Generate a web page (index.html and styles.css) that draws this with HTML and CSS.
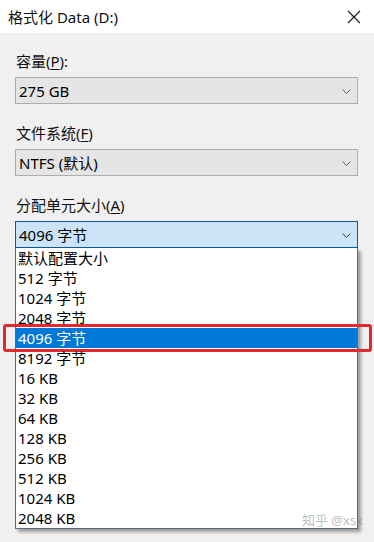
FILE: index.html
```html
<!DOCTYPE html>
<html lang="zh-CN">
<head>
  <meta charset="UTF-8">
  <meta name="viewport" content="width=device-width, initial-scale=1.0">
  <title>格式化 Data (D:)</title>
  <link rel="stylesheet" href="styles.css">
</head>
<body>
  <div class="dialog">
    <div class="titlebar">
      <span class="title">格式化 Data (D:)</span>
      <svg class="close" width="14" height="14" viewBox="0 0 14 14">
        <path d="M1 1 L13 13 M13 1 L1 13" stroke="#1a1a1a" stroke-width="1.1" fill="none"/>
      </svg>
    </div>

    <div class="content">
      <div class="field">
        <div class="label">容量(<u>P</u>):</div>
        <div class="combo">
          <span>275 GB</span>
          <svg class="chev" width="9" height="5" viewBox="0 0 9 5"><path d="M0.5 0.5 L4.5 4.5 L8.5 0.5" stroke="#5f5f5f" stroke-width="1" fill="none"/></svg>
        </div>
      </div>

      <div class="field">
        <div class="label">文件系统(<u>F</u>)</div>
        <div class="combo">
          <span>NTFS (默认)</span>
          <svg class="chev" width="9" height="5" viewBox="0 0 9 5"><path d="M0.5 0.5 L4.5 4.5 L8.5 0.5" stroke="#5f5f5f" stroke-width="1" fill="none"/></svg>
        </div>
      </div>

      <div class="field">
        <div class="label">分配单元大小(<u>A</u>)</div>
        <div class="combo open">
          <span>4096 字节</span>
          <svg class="chev" width="9" height="5" viewBox="0 0 9 5"><path d="M0.5 0.5 L4.5 4.5 L8.5 0.5" stroke="#3c3c3c" stroke-width="1" fill="none"/></svg>
        </div>
        <ul class="list">
          <li>默认配置大小</li>
          <li>512 字节</li>
          <li>1024 字节</li>
          <li>2048 字节</li>
          <li class="selected">4096 字节<span class="mark"></span></li>
          <li>8192 字节</li>
          <li>16 KB</li>
          <li>32 KB</li>
          <li>64 KB</li>
          <li>128 KB</li>
          <li>256 KB</li>
          <li>512 KB</li>
          <li>1024 KB</li>
          <li>2048 KB</li>
        </ul>
        <span class="watermark">知乎 @xsx</span>
      </div>
    </div>
  </div>
</body>
</html>
```

FILE: styles.css
```css
body {
  margin: 0;
  font-family: "Noto Sans", "Noto Sans CJK SC", sans-serif;
  font-size: 15px;
  color: #000;
  background: #f0f0f0;
}
.dialog {
  width: 374px;
  height: 542px;
  overflow: hidden;
  background: #f0f0f0;
}
.titlebar {
  height: 33px;
  background: #fff;
  display: flex;
  align-items: center;
  justify-content: space-between;
  padding: 0 13px 0 8px;
}
.title {
  font-size: 15px;
  color: #111;
  margin-top: -1px;
}
.content {
  padding: 18px 16px 0 15px;
}
.field {
  position: relative;
  margin-bottom: 19px;
}
.label {
  height: 20px;
  line-height: 20px;
  margin: 0 0 6px 1px;
  color: #111;
}
.label u {
  text-underline-offset: 2px;
}
.combo {
  height: 25px;
  border: 1px solid #adadad;
  background: #e5e5e5;
  display: flex;
  align-items: center;
  justify-content: space-between;
  padding: 0 6px 0 3px;
}
.combo.open {
  background: #cce4f7;
  border-color: #0a5a9c;
}
.chev {
  margin-top: 1px;
}
.list {
  list-style: none;
  margin: 0;
  padding: 0;
  background: #fff;
  border: 1px solid #5a6a78;
  border-top: none;
  box-shadow: 3px 3px 3px rgba(0, 0, 0, 0.35);
}
.list li {
  height: 20px;
  line-height: 20px;
  padding-left: 2px;
  position: relative;
}
.list li.selected {
  background: #0078d7;
  color: #fff;
}
.mark {
  position: absolute;
  left: -13px;
  right: -15px;
  top: -4px;
  bottom: -4px;
  border: 3px solid #e02a2e;
  border-radius: 3px;
}
.watermark {
  position: absolute;
  right: -5px;
  bottom: 0;
  white-space: nowrap;
  font-size: 13px;
  color: rgba(130, 130, 130, 0.55);
}
```
